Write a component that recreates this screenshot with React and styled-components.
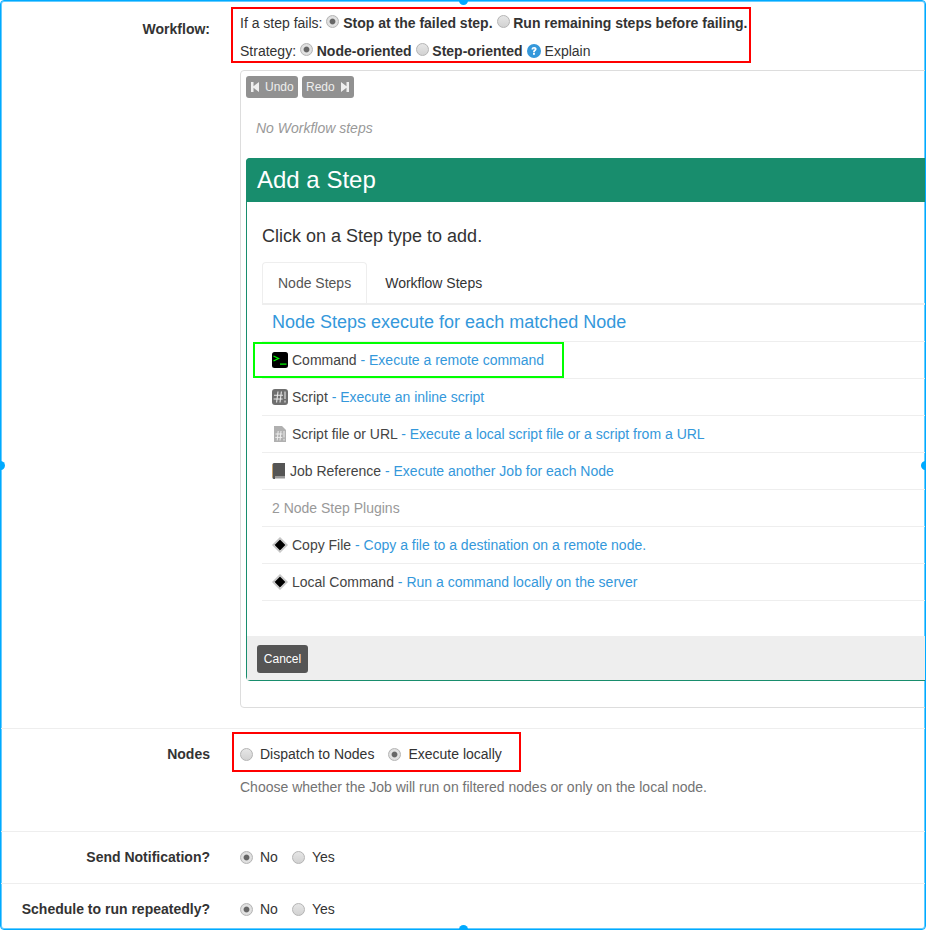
import React from "react";
import styled, { createGlobalStyle } from "styled-components";

const Global = createGlobalStyle`
  html, body {
    margin: 0;
    padding: 0;
    background: #fff;
  }
  body {
    font-family: "Liberation Sans", Arial, sans-serif;
    font-size: 14px;
    line-height: 20px;
    color: #333;
  }
`;

const Frame = styled.div`
  position: relative;
  box-sizing: border-box;
  width: 926px;
  height: 930px;
  overflow: hidden;
  border: 1px solid #00aaff;
  border-radius: 4px;
  box-shadow: inset 0 0 0 1px rgba(0, 170, 255, 0.6);
`;

const Handle = styled.span`
  position: absolute;
  width: 9px;
  height: 9px;
  border-radius: 50%;
  background: #00aaff;
  ${p => p.$side === "top" && "top: -5px; left: 458px;"}
  ${p => p.$side === "bottom" && "bottom: -5px; left: 458px;"}
  ${p => p.$side === "left" && "left: -5px; top: 460px;"}
  ${p => p.$side === "right" && "right: -5px; top: 460px;"}
`;

const Row = styled.div`
  display: grid;
  grid-template-columns: 209px 1fr;
  column-gap: 30px;
  box-sizing: border-box;
  height: ${p => p.$height}px;
  padding-top: ${p => p.$top}px;
  border-bottom: ${p => (p.$last ? "none" : "1px solid #eee")};
`;

const Label = styled.div`
  font-weight: bold;
  text-align: right;
  padding-top: ${p => p.$top || 0}px;
`;

const Field = styled.div`
  min-width: 0;
`;

const RedBox = styled.div`
  box-sizing: border-box;
  width: ${p => p.$width}px;
  height: ${p => p.$height}px;
  margin-left: ${p => p.$left}px;
  padding: ${p => p.$pad};
  border: 2px solid #f00;
`;

const Line = styled.div`
  display: flex;
  align-items: center;
  gap: 4px;
  height: 20px;
  white-space: nowrap;
  margin-bottom: ${p => p.$gap || 0}px;
`;

const Radio = styled.input.attrs({ type: "radio", readOnly: true })`
  appearance: none;
  box-sizing: border-box;
  flex: none;
  width: 13px;
  height: 13px;
  margin: ${p => (p.$raised ? "0 -0.3px 4px 0" : "0")};
  border: 1px solid #b4b4b4;
  border-radius: 50%;
  background: ${p =>
    p.checked
      ? "radial-gradient(circle, #666 0, #666 2.4px, #e4e4e4 3.4px, #d4d4d4 100%)"
      : "linear-gradient(#e6e6e6, #d2d2d2)"};
`;

const Option = styled.label`
  display: inline-flex;
  align-items: center;
  gap: 7px;
  margin-right: 10px;
`;

const Panel = styled.div`
  box-sizing: border-box;
  width: 900px;
  height: 638px;
  margin-top: 7px;
  padding: 5px;
  border: 1px solid #ddd;
  border-radius: 4px;
`;

const UndoBar = styled.div`
  display: flex;
  gap: 4px;
`;

const SmallButton = styled.button`
  display: inline-flex;
  align-items: center;
  gap: 6px;
  width: 52px;
  height: 22px;
  padding: 0 0 0 ${p => p.$left}px;
  border: 0;
  border-radius: 3px;
  background: #919191;
  color: #eee;
  font: 12px/18px "Liberation Sans", Arial, sans-serif;
`;

const Empty = styled.div`
  margin: 20px 0 20px 10px;
  font-style: italic;
  color: #999;
`;

const StepCard = styled.div`
  box-sizing: border-box;
  height: 523px;
  border: 1px solid #188d6d;
  border-radius: 4px 0 0 4px;
  display: flex;
  flex-direction: column;
`;

const StepHeader = styled.div`
  height: 44px;
  margin: -1px -1px 0;
  padding-left: 11px;
  border-radius: 4px 0 0 0;
  background: #188d6d;
  color: #fff;
  font-size: 24px;
  line-height: 44px;
`;

const StepBody = styled.div`
  flex: 1;
  padding: 0 0 0 15px;
`;

const Prompt = styled.div`
  margin-top: 24px;
  font-size: 18px;
  line-height: 20px;
`;

const Tabs = styled.div`
  display: flex;
  gap: 2px;
  box-sizing: border-box;
  height: 43px;
  margin-top: 16px;
  border-bottom: 2px solid #eee;
`;

const Tab = styled.div`
  box-sizing: border-box;
  height: 41px;
  padding: 10px 15px;
  color: ${p => (p.$active ? "#555" : "#333")};
  border: 1px solid ${p => (p.$active ? "#eee" : "transparent")};
  border-bottom: 0;
  border-radius: 4px 4px 0 0;
`;

const StepHeading = styled.div`
  height: 37px;
  box-sizing: border-box;
  padding: 5px 0 0 10px;
  color: #3498db;
  font-size: 18px;
  line-height: 24px;
  border-bottom: 1px solid #eee;
`;

const StepRow = styled.div`
  position: relative;
  display: flex;
  align-items: center;
  gap: 4px;
  box-sizing: border-box;
  height: 37px;
  padding-left: 10px;
  border-bottom: 1px solid #eee;
  color: ${p => (p.$muted ? "#999" : "#444")};
  white-space: nowrap;
`;

const Hint = styled.span`
  color: #3498db;
`;

const GreenBox = styled.div`
  position: absolute;
  box-sizing: border-box;
  left: -9px;
  top: 0;
  width: 311px;
  height: 36px;
  border: 2px solid #0f0;
`;

const StepFooter = styled.div`
  height: 44px;
  box-sizing: border-box;
  padding: 9px 10px;
  background: #eee;
`;

const CancelButton = styled.button`
  height: 28px;
  width: 51px;
  padding: 0;
  border: 0;
  border-radius: 3px;
  background: #555;
  color: #fff;
  font: 12px/18px "Liberation Sans", Arial, sans-serif;
`;

const HelpText = styled.div`
  margin-top: 5px;
  color: #737373;
`;

const SkipBack = () => (
  <svg width="8" height="12" viewBox="0 0 8 12">
    <path d="M0 1h2.5v4.2L8 1v10L2.5 6.8V11H0z" fill="#eee" />
  </svg>
);

const SkipForward = () => (
  <svg width="8" height="12" viewBox="0 0 8 12">
    <path d="M8 1H5.5v4.2L0 1v10l5.5-4.2V11H8z" fill="#eee" />
  </svg>
);

const HelpIcon = () => (
  <svg width="14" height="14" viewBox="0 0 14 14">
    <circle cx="7" cy="7" r="7" fill="#3498db" />
    <path d="M4.5 5.4C4.6 3.8 5.7 3 7.1 3c1.5 0 2.5.9 2.5 2.1 0 1.8-1.7 1.7-1.7 3.1H6c0-2.1 1.6-2 1.6-3 0-.4-.2-.7-.6-.7-.5 0-.7.4-.7.9z" fill="#fff" />
    <rect x="6" y="8.9" width="1.9" height="1.9" fill="#fff" />
  </svg>
);

const CommandIcon = () => (
  <svg width="16" height="16" viewBox="0 0 16 16">
    <rect width="16" height="16" rx="2.5" fill="#000" />
    <path d="M1.5 4l5 2.5-5 2.5" fill="none" stroke="#0f0" strokeWidth="1.3" />
    <rect x="8" y="11.5" width="6.5" height="1.2" fill="#0f0" />
  </svg>
);

const ScriptIcon = () => (
  <svg width="16" height="16" viewBox="0 0 16 16">
    <rect width="16" height="16" rx="3" fill="#6f6f6f" />
    <path d="M6 2.5L4.6 13.5M9.4 2.5L8 13.5M2 6.2h9M1.6 10h9M13 2.5v7.5M13 11.6v2" stroke="#e8e8e8" strokeWidth="1.1" fill="none" />
  </svg>
);

const ScriptFileIcon = () => (
  <svg width="16" height="16" viewBox="0 0 16 16">
    <path d="M2 0h8l4 4v12H2z" fill="#b0b0b0" />
    <path d="M6.2 5l-1 9.5M9 5l-1 9.5M3.5 8h7M3.3 11.4h7M12 5v6.5M12 12.8v1.7" stroke="#eee" strokeWidth="1" fill="none" />
  </svg>
);

const BookIcon = () => (
  <svg width="14" height="16" viewBox="0 0 14 16">
    <path d="M2 0h11v13H3v3H2a1.5 1.5 0 0 1-1.5-1.5V1.5A1.5 1.5 0 0 1 2 0z" fill="#555" />
    <path d="M.5 1.5V14.5" stroke="#c9a26a" strokeWidth="1" />
    <rect x="3" y="13" width="10" height="2.5" fill="#999" />
  </svg>
);

const PluginIcon = () => (
  <svg width="16" height="16" viewBox="0 0 16 16">
    <path d="M8 0l8 8-8 8-8-8z" fill="#c4c4c4" />
    <path d="M8 1.6L14.4 8 8 14.4 1.6 8z" fill="#e4e4e4" />
    <path d="M8 2.8L13.2 8 8 13.2 2.8 8z" fill="#000" stroke="#000" strokeWidth="0.6" strokeLinejoin="round" />
  </svg>
);

const steps = [
  { icon: <ScriptIcon />, name: "Script", hint: "Execute an inline script" },
  { icon: <ScriptFileIcon />, name: "Script file or URL", hint: "Execute a local script file or a script from a URL" },
  { icon: <BookIcon />, name: "Job Reference", hint: "Execute another Job for each Node" },
];

const plugins = [
  { name: "Copy File", hint: "Copy a file to a destination on a remote node." },
  { name: "Local Command", hint: "Run a command locally on the server" },
];

const YesNo = () => (
  <Line>
    <Option>
      <Radio checked />
      No
    </Option>
    <Option>
      <Radio checked={false} />
      Yes
    </Option>
  </Line>
);

export default function App() {
  return (
    <>
      <Global />
      <Frame>
        <Row $height={728} $top={6}>
          <Label $top={12}>Workflow:</Label>
          <Field>
            <RedBox $width={520} $height={56} $left={-9} $pad="4px 0 0 7px">
              <Line $gap={8}>
                If a step fails:
                <Radio checked $raised />
                <b>Stop at the failed step.</b>
                <Radio checked={false} $raised />
                <b>Run remaining steps before failing.</b>
              </Line>
              <Line>
                Strategy:
                <Radio checked $raised />
                <b>Node-oriented</b>
                <Radio checked={false} $raised />
                <b>Step-oriented</b>
                <HelpIcon />
                Explain
              </Line>
            </RedBox>
            <Panel>
              <UndoBar>
                <SmallButton $left={5}>
                  <SkipBack />
                  Undo
                </SmallButton>
                <SmallButton $left={4}>
                  Redo
                  <SkipForward />
                </SmallButton>
              </UndoBar>
              <Empty>No Workflow steps</Empty>
              <StepCard>
                <StepHeader>Add a Step</StepHeader>
                <StepBody>
                  <Prompt>Click on a Step type to add.</Prompt>
                  <Tabs>
                    <Tab $active>Node Steps</Tab>
                    <Tab>Workflow Steps</Tab>
                  </Tabs>
                  <StepHeading>Node Steps execute for each matched Node</StepHeading>
                  <StepRow>
                    <CommandIcon />
                    <span>
                      Command <Hint>- Execute a remote command</Hint>
                    </span>
                    <GreenBox />
                  </StepRow>
                  {steps.map(s => (
                    <StepRow key={s.name}>
                      {s.icon}
                      <span>
                        {s.name} <Hint>- {s.hint}</Hint>
                      </span>
                    </StepRow>
                  ))}
                  <StepRow $muted>2 Node Step Plugins</StepRow>
                  {plugins.map(s => (
                    <StepRow key={s.name}>
                      <PluginIcon />
                      <span>
                        {s.name} <Hint>- {s.hint}</Hint>
                      </span>
                    </StepRow>
                  ))}
                </StepBody>
                <StepFooter>
                  <CancelButton>Cancel</CancelButton>
                </StepFooter>
              </StepCard>
            </Panel>
          </Field>
        </Row>
        <Row $height={103} $top={3}>
          <Label $top={12}>Nodes</Label>
          <Field>
            <RedBox $width={289} $height={40} $left={-8} $pad="10px 0 0 6px">
              <Line>
                <Option>
                  <Radio checked={false} />
                  Dispatch to Nodes
                </Option>
                <Option>
                  <Radio checked />
                  Execute locally
                </Option>
              </Line>
            </RedBox>
            <HelpText>Choose whether the Job will run on filtered nodes or only on the local node.</HelpText>
          </Field>
        </Row>
        <Row $height={52} $top={15}>
          <Label>Send Notification?</Label>
          <Field>
            <YesNo />
          </Field>
        </Row>
        <Row $height={46} $top={15} $last>
          <Label>Schedule to run repeatedly?</Label>
          <Field>
            <YesNo />
          </Field>
        </Row>
        <Handle $side="top" />
        <Handle $side="bottom" />
        <Handle $side="left" />
        <Handle $side="right" />
      </Frame>
    </>
  );
}
